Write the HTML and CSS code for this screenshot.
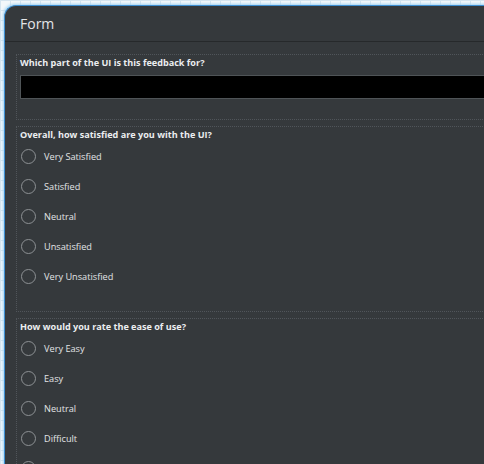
FILE: index.html
```html
<!DOCTYPE html>
<html>
<head>
<meta charset="utf-8">
<link rel="stylesheet" href="styles.css">
</head>
<body>
<div class="card">
  <div class="header">Form</div>
  <div class="content">
    <div class="section">
      <div class="label">Which part of the UI is this feedback for?</div>
      <div class="input"></div>
    </div>
    <div class="section">
      <div class="label">Overall, how satisfied are you with the UI?</div>
      <div class="option"><span class="radio"></span>Very Satisfied</div>
      <div class="option"><span class="radio"></span>Satisfied</div>
      <div class="option"><span class="radio"></span>Neutral</div>
      <div class="option"><span class="radio"></span>Unsatisfied</div>
      <div class="option"><span class="radio"></span>Very Unsatisfied</div>
    </div>
    <div class="section">
      <div class="label">How would you rate the ease of use?</div>
      <div class="option"><span class="radio"></span>Very Easy</div>
      <div class="option"><span class="radio"></span>Easy</div>
      <div class="option"><span class="radio"></span>Neutral</div>
      <div class="option"><span class="radio"></span>Difficult</div>
      <div class="option"><span class="radio"></span>Very Difficult</div>
    </div>
  </div>
</div>
</body>
</html>
```
FILE: styles.css
```css
html, body {
  margin: 0;
  padding: 0;
  width: 484px;
  height: 464px;
  overflow: hidden;
}
body {
  background-color: #f3f7fa;
  background-image:
    linear-gradient(to right, #d5e4ef 1px, transparent 1px),
    linear-gradient(to bottom, #d5e4ef 1px, transparent 1px);
  background-size: 10px 10px;
  font-family: "Open Sans", "Noto Sans", sans-serif;
  padding: 5px 0 0 4px;
  box-sizing: border-box;
}
.card {
  width: 520px;
  height: 520px;
  background: #35393c;
  border-top: 1px solid #3f8fd2;
  border-left: 1px solid #3f8fd2;
  border-top-left-radius: 12px;
  box-shadow: -1px -1px 3px #9fd2f3;
  overflow: hidden;
}
.header {
  height: 36px;
  box-sizing: border-box;
  padding: 8px 0 0 15px;
  font-size: 14px;
  line-height: 20px;
  color: #e4e6e8;
  border-bottom: 1px solid #26292b;
}
.content {
  padding: 12px 0 0 11px;
}
.section {
  border: 1px dotted #50555a;
  padding: 1px 0 20px 3px;
  margin-bottom: 6px;
}
.label {
  font-size: 9.1px;
  font-weight: bold;
  line-height: 14px;
  margin-bottom: -1px;
  color: #eceef0;
}
.input {
  margin-top: 6px;
  height: 22px;
  background: #000;
  border: 1px solid #4f5457;
}
.option {
  display: flex;
  align-items: center;
  height: 30px;
  font-size: 9.2px;
  color: #e2e4e6;
}
.radio {
  width: 13px;
  height: 13px;
  border: 1.5px solid #8d9194;
  border-radius: 50%;
  margin: 0 8px 0 1px;
  flex: none;
}
```
